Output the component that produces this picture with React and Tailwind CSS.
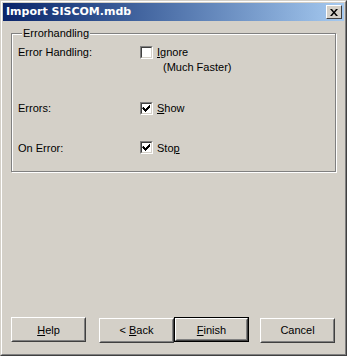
import React from "react";

const font = { fontFamily: '"Liberation Sans", Arial, sans-serif' };
const titleFont = { fontFamily: '"DejaVu Sans", Verdana, sans-serif' };

function Check({ checked }) {
  return (
    <span className="w-[13px] h-[13px] shrink-0 border border-t-[#808080] border-l-[#808080] border-b-white border-r-white">
      <span className="block w-[11px] h-[11px] bg-white border border-t-[#404040] border-l-[#404040] border-b-[#d4d0c8] border-r-[#d4d0c8]">
        {checked && (
          <svg width="9" height="9" viewBox="0 0 9 9" className="block">
            <path d="M1 3h1v1h1v1h1v-1h1v-1h1v-1h1v-1h1v3h-1v1h-1v1h-1v1h-1v1h-1v-1h-1v-1h-1v-1h-1z" fill="#000" />
          </svg>
        )}
      </span>
    </span>
  );
}

function Btn({ children, primary }) {
  const inner = (
    <span className="flex w-full h-full border border-t-white border-l-white border-b-[#404040] border-r-[#404040]">
      <span className="flex flex-1 items-center justify-center border border-t-transparent border-l-transparent border-b-[#808080] border-r-[#808080]">
        {children}
      </span>
    </span>
  );
  return primary ? (
    <button className="w-[75px] h-[25px] border border-black text-[11px] text-black" style={font}>{inner}</button>
  ) : (
    <button className="w-[75px] h-[25px] text-[11px] text-black" style={font}>{inner}</button>
  );
}

export default function App() {
  return (
    <div className="w-[347px] h-[356px] bg-[#d4d0c8] border border-t-[#d4d0c8] border-l-[#d4d0c8] border-b-[#404040] border-r-[#404040]" style={font}>
      <div className="flex flex-col h-full border border-t-white border-l-white border-b-[#808080] border-r-[#808080]">
        <div className="mx-[1px] mt-[1px] h-[18px] flex items-center justify-between pl-[3px] pr-[2px] bg-gradient-to-r from-[#0a246a] to-[#a6caf0]">
          <span className="text-white font-bold text-[11px]" style={titleFont}>Import SISCOM.mdb</span>
          <span className="w-[16px] h-[14px] flex items-center justify-center bg-[#d4d0c8] border border-t-white border-l-white border-b-[#404040] border-r-[#404040]">
            <svg width="8" height="7" viewBox="0 0 8 7">
              <path d="M0 0h2l2 2.5L6 0h2L5 3.5 8 7H6L4 4.5 2 7H0l3-3.5z" fill="#000" />
            </svg>
          </span>
        </div>

        <fieldset className="mx-[9px] mt-[6px] h-[145px] border border-[#808080] shadow-[inset_1px_1px_0_#fff,1px_1px_0_#fff] px-[6px] text-[11px] text-black">
          <legend className="ml-[4px] px-[1px] bg-[#d4d0c8] leading-[13px]">Errorhandling</legend>
          <div className="flex pt-[4px]">
            <span className="w-[122px]">Error Handling:</span>
            <div className="flex flex-col">
              <div className="flex items-center gap-[4px]">
                <Check />
                <span><u>I</u>gnore</span>
              </div>
              <span className="ml-[23px] -mt-[2px]">(Much Faster)</span>
            </div>
          </div>
          <div className="flex items-center mt-[25px]">
            <span className="w-[122px]">Errors:</span>
            <Check checked />
            <span className="ml-[4px]"><u>S</u>how</span>
          </div>
          <div className="flex items-center mt-[23px]">
            <span className="w-[122px]">On Error:</span>
            <Check checked />
            <span className="ml-[4px]">Sto<u>p</u></span>
          </div>
        </fieldset>

        <div className="mt-auto mb-[11px] flex px-[9px]">
          <Btn><span><u>H</u>elp</span></Btn>
          <div className="ml-[13px]"><Btn><span>&lt; <u>B</u>ack</span></Btn></div>
          <Btn primary><span><u>F</u>inish</span></Btn>
          <div className="ml-[11px]"><Btn>Cancel</Btn></div>
        </div>
      </div>
    </div>
  );
}
